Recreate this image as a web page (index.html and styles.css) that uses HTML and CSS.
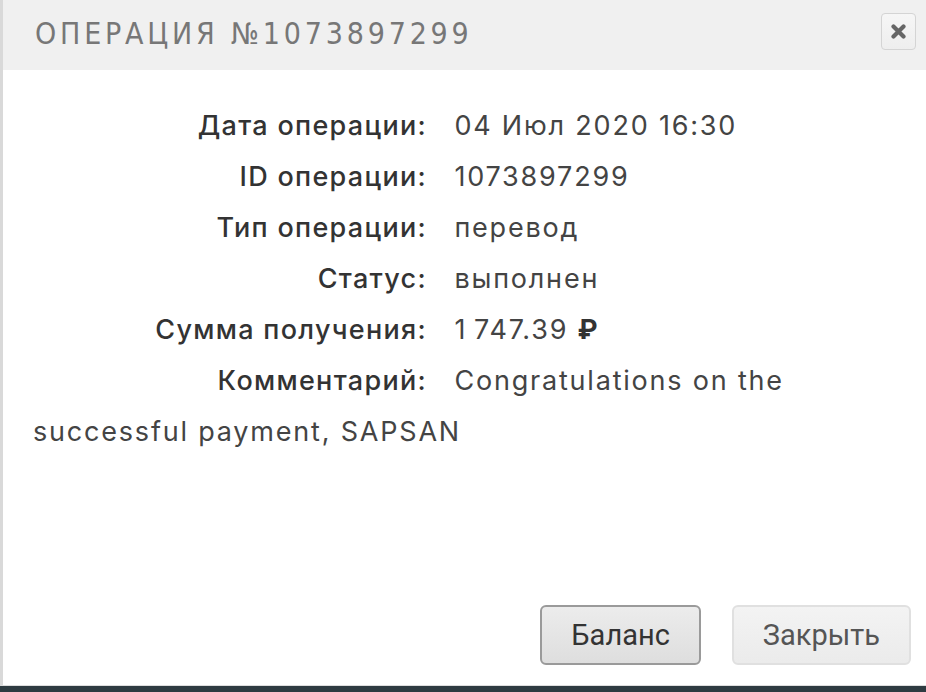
FILE: index.html
```html
<!DOCTYPE html>
<html>

<head>
    <meta charset="UTF-8">
    <title>Операция №1073897299</title>
    <link rel="stylesheet" href="styles.css">
</head>

<body>
    <div class="modal">
        <!-- Заголовок -->
        <div class="modal-header">
            <span class="modal-title">ОПЕРАЦИЯ №1073897299</span>
            <button class="btn-close" type="button">
                <svg width="15" height="15" viewBox="0 0 15 15">
                    <path d="M2.5 2.5L12.5 12.5M12.5 2.5L2.5 12.5" stroke="#666" stroke-width="4.2" stroke-linecap="round"/>
                </svg>
            </button>
        </div>

        <!-- Детали операции -->
        <div class="modal-body">
            <div class="row"><span class="label">Дата операции:</span> 04 Июл 2020 16:30</div>
            <div class="row"><span class="label">ID операции:</span> 1073897299</div>
            <div class="row"><span class="label">Тип операции:</span> перевод</div>
            <div class="row"><span class="label">Статус:</span> выполнен</div>
            <div class="row"><span class="label">Сумма получения:</span> 1&#8201;747.39 <b class="rub">&#8381;</b></div>
            <div class="row"><span class="label">Комментарий:</span> Congratulations on the successful payment, SAPSAN</div>
        </div>

        <!-- Кнопки -->
        <div class="modal-footer">
            <button class="btn btn-main" type="button">Баланс</button>
            <button class="btn" type="button">Закрыть</button>
        </div>
    </div>
</body>

</html>
```

FILE: styles.css
```css
body {
    margin: 0;
    padding: 0;
    background-color: #2e3b41;
    font-family: Inter, "Open Sans", Arial, sans-serif;
}

.modal {
    height: 685px;
    background-color: #fff;
    border-left: 3px solid #d9d9d9;
    border-bottom: 1px solid #dedede;
    display: flex;
    flex-direction: column;
}

.modal-header {
    height: 70px;
    background-color: #f0f0f0;
    display: flex;
    align-items: center;
    justify-content: space-between;
    padding: 0 10px 0 32px;
}

.modal-title {
    font-family: "DejaVu Sans Condensed", "Liberation Sans Narrow", sans-serif;
    font-size: 30px;
    letter-spacing: 3.8px;
    color: #777;
    margin-top: -4px;
}

.btn-close {
    width: 35px;
    height: 37px;
    margin-top: -8px;
    border: 1px solid #d4d4d4;
    border-radius: 4px;
    background: linear-gradient(#f6f6f6, #eeeeee);
    padding: 0;
    display: flex;
    align-items: center;
    justify-content: center;
    cursor: pointer;
}

.modal-body {
    flex: 1;
    padding: 30px 33px 0 30px;
    font-size: 27px;
    line-height: 51px;
    color: #444;
    letter-spacing: 1.8px;
}

.label {
    display: inline-block;
    width: 394px;
    margin-right: 18px;
    text-align: right;
    font-weight: 500;
    color: #333;
    letter-spacing: 1.3px;
}

.rub {
    font-weight: 700;
    color: #333;
}

.modal-footer {
    display: flex;
    justify-content: flex-end;
    gap: 31px;
    padding: 0 15px 20px 0;
}

.btn {
    height: 60px;
    padding: 0 29px;
    font-family: Roboto, Arial, sans-serif;
    font-size: 29px;
    color: #555;
    background: linear-gradient(#f3f3f3, #ebebeb);
    border: 2px solid #e0e0e0;
    border-radius: 6px;
    cursor: pointer;
}

.btn-main {
    color: #333;
    background: linear-gradient(#ececec, #dedede);
    border-color: #9a9a9a;
}
```
